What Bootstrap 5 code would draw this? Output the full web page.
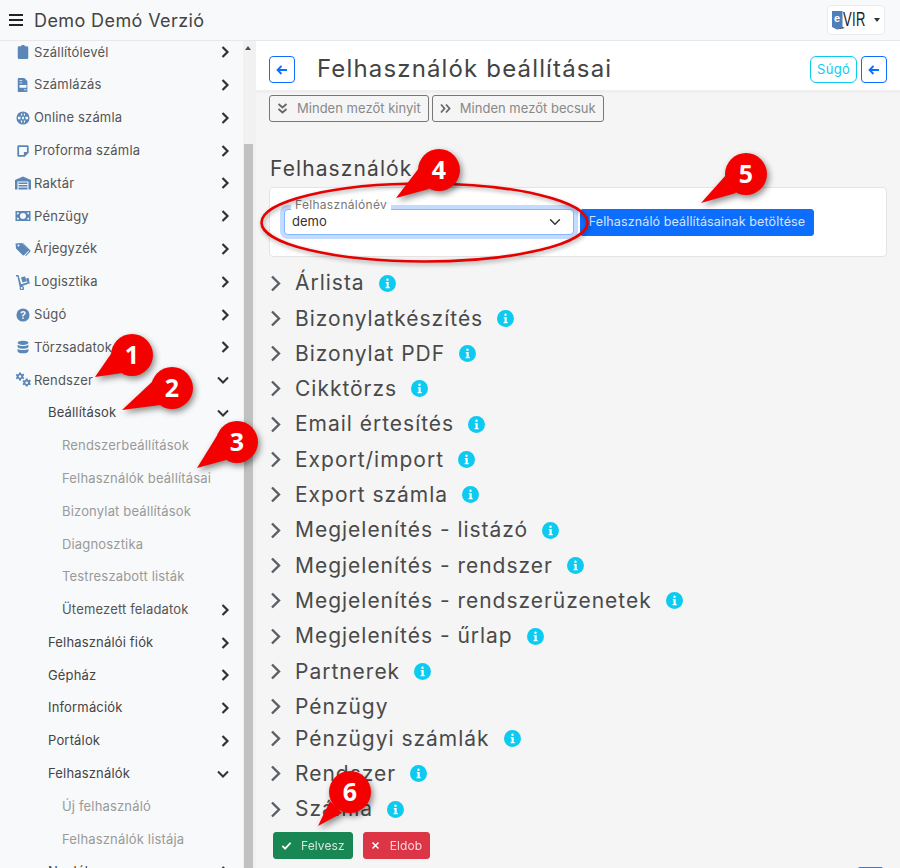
<!DOCTYPE html>
<html lang="hu">
<head>
  <meta charset="utf-8">
  <title>Felhasználók beállításai</title>
  <link rel="stylesheet" href="https://cdn.jsdelivr.net/npm/bootstrap@5.3.0/dist/css/bootstrap.min.css">
  <style>
    html, body { height: 100%; }
    body { font-family: Inter, "Open Sans", sans-serif; background: #f5f5f5; color: #495057; overflow: hidden; position: relative; }

    /* top bar */
    .top-bar { height: 41px; padding: 0 15px 0 9px; background: #f8f9fa; border-bottom: 1px solid #e7e8e9; flex-shrink: 0; }
    .app-title { font-size: 18px; letter-spacing: .4px; color: #444; margin-left: 11px; }
    .logo-btn { width: 58px; height: 30px; background: #fff; border: 1px solid #e9ecef; border-radius: 4px; padding: 0 0 0 3px; }
    .logo-caret { border-top: 4px solid #333; border-left: 3.5px solid transparent; border-right: 3.5px solid transparent; margin-left: 6px; }

    /* sidebar */
    .side-menu { width: 243px; background: #f8f9fa; overflow: hidden; flex-shrink: 0; }
    .side-list { margin-top: -5.1px; }
    .side-row { height: 32.8px; font-size: 13px; letter-spacing: .17px; color: #555; padding: 0 13px 0 34px; position: relative; text-decoration: none; }
    .side-row.lvl2 { padding-left: 48px; color: #444; }
    .side-row.lvl3 { padding-left: 62px; color: #999; }
    .side-row.lvl3-dark { padding-left: 62px; color: #555; }
    .side-icon { position: absolute; left: 16px; top: 9.4px; width: 14px; height: 14px; fill: #5a86b8; }
    .side-icon.wide { left: 15px; top: 8.4px; width: 16px; height: 16px; }
    .chev { width: 10px; height: 12px; fill: none; stroke: #333; stroke-width: 2.2; }
    .chev-down { width: 14px; height: 10px; fill: none; stroke: #333; stroke-width: 2; }
    .side-scroll { width: 13px; background: #f1f1f1; flex-shrink: 0; padding: 103px 3px 0 1px; position: relative; }
    .side-scroll-thumb { height: 100%; background: #c1c1c1; }
    .side-scroll-up { position: absolute; top: 5px; left: 2px; border-bottom: 4px solid #505050; border-left: 3.5px solid transparent; border-right: 3.5px solid transparent; }

    /* content */
    .page-head { height: 52px; background: #fff; padding: 8px 13px 0 13px; border-bottom: 3px solid #efefef; flex-shrink: 0; }
    .page-title { font-size: 24px; font-weight: 400; letter-spacing: 1.15px; margin: 0 0 0 22px; color: #444; }
    .square-btn { width: 26px; height: 27px; padding: 0; border-radius: 4px; }
    .square-btn svg { width: 12px; height: 12px; fill: none; stroke: currentColor; stroke-width: 1.8; }
    .help-btn { height: 27px; width: 47px; padding: 0; font-size: 13px; letter-spacing: .3px; }
    .tool-row { padding: 2px 0 0 13px; gap: 3px; }
    .tool-btn { height: 27px; font-size: 13px; letter-spacing: .02px; color: #888; border: 1px solid #777; border-radius: 3px; padding: 0 7px; background: transparent; }
    .tool-btn svg { width: 11px; height: 11px; fill: none; stroke: #666; stroke-width: 1.8; margin-right: 9px; }
    .section-title { font-size: 21px; font-weight: 400; letter-spacing: 1.1px; margin: 34px 0 6px 14px; line-height: 25px; color: #444; }
    .user-card { margin: 0 13px 0 13px; height: 70px; padding: 21px 0 0 14px; border-color: #e4e4e4; border-radius: 4px; }
    .user-select-wrap { width: 290px; position: relative; }
    .user-select { height: 26px; padding: 0 30px 0 7px; font-size: 13px; color: #333; border-color: #86b7fe; border-radius: 4px; box-shadow: 0 0 0 4px rgba(13, 110, 253, .25); background-position: right 10px center; }
    .user-label { position: absolute; left: 7px; top: -11px; background: #fff; padding: 0 4px; font-size: 12px; letter-spacing: .3px; line-height: 14px; color: #777; }
    .load-btn { height: 27px; width: 234px; margin-left: 6px; padding: 0; font-size: 12.5px; letter-spacing: .12px; border-radius: 3px; color: #d4e4ff; }
    .group-list { padding: 8.4px 0 0 14px; }
    .group-row { height: 35.3px; font-size: 21px; letter-spacing: .98px; color: #4a4a4a; }
    .group-row.short { height: 32px; padding-top: 3px; }
    .group-chev { width: 11px; height: 17px; fill: none; stroke: #5a5f66; stroke-width: 2.4; margin-right: 14px; }
    .info-dot { width: 17px; height: 17px; margin-left: 14px; }
    .form-actions { padding: 5.4px 0 0 17px; gap: 10px; }
    .act-btn { height: 27px; font-size: 12px; letter-spacing: .1px; padding: 0 7px; border-radius: 3px; }
    .act-btn span { opacity: .8; }
    .act-btn svg { width: 11px; height: 11px; fill: none; stroke: #fff; stroke-width: 2; margin-right: 9px; }
    .act-btn svg.act-x { width: 9px; height: 9px; margin-right: 10px; }
    .bottom-peek { position: absolute; right: 17px; bottom: -26px; width: 25px; height: 27px; background: #2f7fe0; border-radius: 2px; }

    /* numbered markers lying over the page */
    .marks { position: absolute; left: 0; top: 0; width: 900px; height: 868px; pointer-events: none; }
    .mark { fill: #f40000; filter: drop-shadow(2px 3px 3px rgba(0, 0, 0, .45)); }
    .mark-num { fill: #fff; font-family: "Open Sans", sans-serif; font-weight: 700; font-size: 25px; text-anchor: middle; }
    .mark-ring { fill: none; stroke: #e80000; stroke-width: 2.6; filter: drop-shadow(1px 2px 2px rgba(0, 0, 0, .35)); }
  </style>
</head>
<body class="d-flex flex-column">

  <svg width="0" height="0" class="position-absolute">
    <symbol id="i-clip" viewBox="0 0 16 16"><path d="M6 1.500a2 2 0 0 1 4 0H12.500A1.500 1.500 0 0 1 14 3v11.500A1.500 1.500 0 0 1 12.500 16h-9A1.500 1.500 0 0 1 2 14.500V3a1.500 1.500 0 0 1 1.500-1.500z"/></symbol>
    <symbol id="i-file" viewBox="0 0 16 16"><path fill-rule="evenodd" d="M3 0h6.500L13 3.500V15a1 1 0 0 1-1 1H3a1 1 0 0 1-1-1V1a1 1 0 0 1 1-1zM4 2.500v1h3v-1zM4 5v1h3V5zM4 8v3h8V8zM9 13v1h3v-1z"/></symbol>
    <symbol id="i-globe" viewBox="0 0 16 16"><path fill-rule="evenodd" d="M8 .5a7.500 7.500 0 1 1 0 15 7.500 7.500 0 0 1 0-15zM7 2C6 3 5.600 4 5.400 5.200h1.600V2zm2 0v3.200h1.600C10.400 4 10 3 9 2zM2.300 6.500v3h2.900a14 14 0 0 1 0-3zm4.700 0a13 13 0 0 0 0 3h2a13 13 0 0 0 0-3zm3.800 0a14 14 0 0 1 0 3h2.900v-3zM5.400 10.800C5.600 12 6 13 7 14v-3.200zm3.600 0V14c1-1 1.400-2 1.600-3.200z"/></symbol>
    <symbol id="i-note" viewBox="0 0 16 16"><path fill-rule="evenodd" d="M3 1.500h10A1.500 1.500 0 0 1 14.500 3v7L10 14.500H3A1.500 1.500 0 0 1 1.500 13V3A1.500 1.500 0 0 1 3 1.500zM3.500 3.500v9H9V9h3.500V3.500z"/></symbol>
    <symbol id="i-ware" viewBox="0 0 16 16"><path fill-rule="evenodd" d="M0 5 8 1.500 16 5v9.500h-2.500V6.500h-11v8H0zM3.500 7.500h9V9h-9zM3.500 10h9v1.500h-9zM3.500 12.500h9V14.500h-9z"/></symbol>
    <symbol id="i-money" viewBox="0 0 16 16"><path fill-rule="evenodd" d="M.5 3h15v10H.5zM8 5a3 3 0 1 0 0 6 3 3 0 0 0 0-6zM2 4.500v2a2 2 0 0 0 2-2zM12 4.500a2 2 0 0 0 2 2v-2zM2 9.500v2h2a2 2 0 0 0-2-2zM14 9.500a2 2 0 0 0-2 2h2z"/></symbol>
    <symbol id="i-tags" viewBox="0 0 16 16"><path fill-rule="evenodd" d="M.5 2.500 1 7.500l6.500 6.500a1.200 1.200 0 0 0 1.700 0l3.800-3.800a1.200 1.200 0 0 0 0-1.700L6.500 2zM3.500 3.500a1 1 0 1 1 0 2 1 1 0 0 1 0-2z"/><path d="M8 2 15 9a1.500 1.500 0 0 1 0 2l-4 4-.8-.8L14 10.400 7 2z"/></symbol>
    <symbol id="i-dolly" viewBox="0 0 16 16"><path fill-rule="evenodd" d="M1 1h2.500l2.600 9.300 8.400-2.500.4 1.400L7.300 12a2.200 2.200 0 1 1-2.500 1.500L2.500 2.500H1zM6.700 13a1 1 0 1 0 0 2 1 1 0 0 0 0-2z"/><path d="m6 3.500 4-1.200 1.500 5-4 1.200zM11 4.500l2.500-.7 1 3.700-2.500.7z"/></symbol>
    <symbol id="i-quest" viewBox="0 0 16 16"><path fill-rule="evenodd" d="M8 .5a7.500 7.500 0 1 1 0 15 7.500 7.500 0 0 1 0-15zM8.200 3.500c-1.700 0-2.800.8-3.100 2.200l1.500.5c.2-.7.700-1.200 1.500-1.200.7 0 1.200.4 1.200.9 0 .6-.5.9-1.100 1.300-.7.500-1.200 1-1.200 2v.4h1.700v-.3c0-.5.300-.8.900-1.200.8-.5 1.500-1.100 1.500-2.300 0-1.400-1.200-2.300-2.900-2.300zM8 10.500a1 1 0 1 0 0 2 1 1 0 0 0 0-2z"/></symbol>
    <symbol id="i-db" viewBox="0 0 16 16"><path d="M8 .8c3.600 0 6.200 1 6.200 2.400S11.600 5.600 8 5.600 1.800 4.600 1.800 3.200 4.400.8 8 .8z"/><path d="M1.800 5.300C3 6.400 5.400 6.900 8 6.900s5-.5 6.200-1.600v2.500c0 1.300-2.600 2.300-6.200 2.300s-6.200-1-6.200-2.300z"/><path d="M1.800 9.900c1.200 1.100 3.600 1.600 6.200 1.600s5-.5 6.200-1.600v2.900c0 1.400-2.600 2.400-6.200 2.400s-6.200-1-6.200-2.400z"/></symbol>
    <symbol id="i-cogs" viewBox="0 0 16 16"><path fill-rule="evenodd" d="M4 .5h2l.2 1.300 1 .5 1.100-.7 1 1.400-1 .9v1.100l1 .9-1 1.400-1.100-.7-1 .5L6 8.500H4l-.2-1.400-1-.5-1.100.7-1-1.400 1-.9V4.100l-1-.9 1-1.400 1.100.7 1-.5zM5 3.200a1.300 1.300 0 1 0 0 2.600 1.300 1.300 0 0 0 0-2.600z"/><path fill-rule="evenodd" d="M10.700 6.500h2l.2 1.200 1 .5 1.100-.6.900 1.400-.9.900v1.100l.9.900-.9 1.400-1.100-.6-1 .5-.2 1.300h-2l-.2-1.300-1-.5-1.100.6-.9-1.400.9-.9V10.300l-.9-.9.900-1.400 1.100.6 1-.5zM11.700 9.500a1.300 1.300 0 1 0 0 2.600 1.300 1.300 0 0 0 0-2.600z"/></symbol>
    <symbol id="c-right" viewBox="0 0 10 12"><path d="M2.500 1 7.500 6l-5 5"/></symbol>
    <symbol id="c-down" viewBox="0 0 14 10"><path d="M2 2.500 7 7.500l5-5"/></symbol>
    <symbol id="c-group" viewBox="0 0 11 17"><path d="M2 1.500 9 8.500l-7 7"/></symbol>
    <symbol id="i-info" viewBox="0 0 17 17"><circle cx="8.500" cy="8.500" r="8.500" fill="#0dcaf0"/><path fill="#fff" d="M8.500 3.500a1.200 1.200 0 1 1 0 2.400 1.200 1.200 0 0 1 0-2.400zM6.800 7h2.900v5h1v1.300H6.600V12h1V8.300h-.8z"/></symbol>
    <symbol id="i-back" viewBox="0 0 12 12"><path d="M11 6H1.500M5.500 2 1.500 6l4 4"/></symbol>
  </svg>

  <nav class="navbar top-bar d-flex justify-content-between align-items-center flex-nowrap">
    <div class="d-flex align-items-center">
      <svg width="14" height="12" viewBox="0 0 14 12" fill="#222"><rect y="0" width="14" height="2"/><rect y="5" width="14" height="2"/><rect y="10" width="14" height="2"/></svg>
      <span class="app-title">Demo Demó Verzió</span>
    </div>
    <button class="btn logo-btn d-flex align-items-center" type="button">
      <svg width="37" height="22" viewBox="0 0 37 22">
        <path d="M1 2h10.500v16L6 20.500 1 18z" fill="#4f7fb8"/>
        <path d="M11.500 18 6 20.500 14 19z" fill="#333"/>
        <text x="3" y="13" fill="#fff" font-family="Liberation Sans, sans-serif" font-size="11" font-weight="700">e</text>
        <text transform="translate(12 17) scale(1 1.6)" fill="#222" font-family="Liberation Sans, sans-serif" font-size="13" letter-spacing=".4">VIR</text>
      </svg>
      <span class="logo-caret"></span>
    </button>
  </nav>

  <div class="d-flex flex-grow-1 overflow-hidden">
    <aside class="side-menu">
      <nav class="nav flex-column flex-nowrap side-list">
        <a class="side-row d-flex align-items-center justify-content-between" href="#"><svg class="side-icon"><use href="#i-clip"/></svg>Szállítólevél<svg class="chev"><use href="#c-right"/></svg></a>
        <a class="side-row d-flex align-items-center justify-content-between" href="#"><svg class="side-icon"><use href="#i-file"/></svg>Számlázás<svg class="chev"><use href="#c-right"/></svg></a>
        <a class="side-row d-flex align-items-center justify-content-between" href="#"><svg class="side-icon"><use href="#i-globe"/></svg>Online számla<svg class="chev"><use href="#c-right"/></svg></a>
        <a class="side-row d-flex align-items-center justify-content-between" href="#"><svg class="side-icon"><use href="#i-note"/></svg>Proforma számla<svg class="chev"><use href="#c-right"/></svg></a>
        <a class="side-row d-flex align-items-center justify-content-between" href="#"><svg class="side-icon wide"><use href="#i-ware"/></svg>Raktár<svg class="chev"><use href="#c-right"/></svg></a>
        <a class="side-row d-flex align-items-center justify-content-between" href="#"><svg class="side-icon wide"><use href="#i-money"/></svg>Pénzügy<svg class="chev"><use href="#c-right"/></svg></a>
        <a class="side-row d-flex align-items-center justify-content-between" href="#"><svg class="side-icon wide"><use href="#i-tags"/></svg>Árjegyzék<svg class="chev"><use href="#c-right"/></svg></a>
        <a class="side-row d-flex align-items-center justify-content-between" href="#"><svg class="side-icon wide"><use href="#i-dolly"/></svg>Logisztika<svg class="chev"><use href="#c-right"/></svg></a>
        <a class="side-row d-flex align-items-center justify-content-between" href="#"><svg class="side-icon"><use href="#i-quest"/></svg>Súgó<svg class="chev"><use href="#c-right"/></svg></a>
        <a class="side-row d-flex align-items-center justify-content-between" href="#"><svg class="side-icon"><use href="#i-db"/></svg>Törzsadatok<svg class="chev"><use href="#c-right"/></svg></a>
        <a class="side-row d-flex align-items-center justify-content-between" href="#"><svg class="side-icon wide"><use href="#i-cogs"/></svg>Rendszer<svg class="chev-down"><use href="#c-down"/></svg></a>
        <a class="side-row lvl2 d-flex align-items-center justify-content-between" href="#">Beállítások<svg class="chev-down"><use href="#c-down"/></svg></a>
        <a class="side-row lvl3 d-flex align-items-center" href="#">Rendszerbeállítások</a>
        <a class="side-row lvl3 d-flex align-items-center" href="#">Felhasználók beállításai</a>
        <a class="side-row lvl3 d-flex align-items-center" href="#">Bizonylat beállítások</a>
        <a class="side-row lvl3 d-flex align-items-center" href="#">Diagnosztika</a>
        <a class="side-row lvl3 d-flex align-items-center" href="#">Testreszabott listák</a>
        <a class="side-row lvl3-dark d-flex align-items-center justify-content-between" href="#">Ütemezett feladatok<svg class="chev"><use href="#c-right"/></svg></a>
        <a class="side-row lvl2 d-flex align-items-center justify-content-between" href="#">Felhasználói fiók<svg class="chev"><use href="#c-right"/></svg></a>
        <a class="side-row lvl2 d-flex align-items-center justify-content-between" href="#">Gépház<svg class="chev"><use href="#c-right"/></svg></a>
        <a class="side-row lvl2 d-flex align-items-center justify-content-between" href="#">Információk<svg class="chev"><use href="#c-right"/></svg></a>
        <a class="side-row lvl2 d-flex align-items-center justify-content-between" href="#">Portálok<svg class="chev"><use href="#c-right"/></svg></a>
        <a class="side-row lvl2 d-flex align-items-center justify-content-between" href="#">Felhasználók<svg class="chev-down"><use href="#c-down"/></svg></a>
        <a class="side-row lvl3 d-flex align-items-center" href="#">Új felhasználó</a>
        <a class="side-row lvl3 d-flex align-items-center" href="#">Felhasználók listája</a>
        <a class="side-row lvl2 d-flex align-items-center justify-content-between" href="#">Naplók<svg class="chev"><use href="#c-right"/></svg></a>
      </nav>
    </aside>
    <div class="side-scroll"><span class="side-scroll-up"></span><div class="side-scroll-thumb"></div></div>

    <main class="flex-grow-1 d-flex flex-column overflow-hidden">
      <header class="page-head d-flex align-items-center">
        <button class="btn btn-outline-primary square-btn d-flex align-items-center justify-content-center" type="button"><svg><use href="#i-back"/></svg></button>
        <h1 class="page-title flex-grow-1">Felhasználók beállításai</h1>
        <button class="btn btn-outline-info help-btn me-1" type="button">Súgó</button>
        <button class="btn btn-outline-primary square-btn d-flex align-items-center justify-content-center" type="button"><svg><use href="#i-back"/></svg></button>
      </header>

      <div class="tool-row d-flex">
        <button class="btn tool-btn d-flex align-items-center" type="button"><svg viewBox="0 0 11 11"><path d="M1.500 1 5.500 4.500 9.500 1M1.500 6 5.500 9.500 9.500 6"/></svg>Minden mezőt kinyit</button>
        <button class="btn tool-btn d-flex align-items-center" type="button"><svg viewBox="0 0 11 11"><path d="M1 1.500 4.500 5.500 1 9.500M6 1.500 9.500 5.500 6 9.500"/></svg>Minden mezőt becsuk</button>
      </div>

      <h2 class="section-title">Felhasználók</h2>
      <div class="card user-card">
        <div class="d-flex align-items-start">
          <div class="user-select-wrap">
            <span class="user-label">Felhasználónév</span>
            <select class="form-select user-select"><option>demo</option></select>
          </div>
          <button class="btn btn-primary load-btn" type="button">Felhasználó beállításainak betöltése</button>
        </div>
      </div>

      <div class="group-list">
        <div class="group-row d-flex align-items-center"><svg class="group-chev"><use href="#c-group"/></svg>Árlista<svg class="info-dot"><use href="#i-info"/></svg></div>
        <div class="group-row d-flex align-items-center"><svg class="group-chev"><use href="#c-group"/></svg>Bizonylatkészítés<svg class="info-dot"><use href="#i-info"/></svg></div>
        <div class="group-row d-flex align-items-center"><svg class="group-chev"><use href="#c-group"/></svg>Bizonylat PDF<svg class="info-dot"><use href="#i-info"/></svg></div>
        <div class="group-row d-flex align-items-center"><svg class="group-chev"><use href="#c-group"/></svg>Cikktörzs<svg class="info-dot"><use href="#i-info"/></svg></div>
        <div class="group-row d-flex align-items-center"><svg class="group-chev"><use href="#c-group"/></svg>Email értesítés<svg class="info-dot"><use href="#i-info"/></svg></div>
        <div class="group-row d-flex align-items-center"><svg class="group-chev"><use href="#c-group"/></svg>Export/import<svg class="info-dot"><use href="#i-info"/></svg></div>
        <div class="group-row d-flex align-items-center"><svg class="group-chev"><use href="#c-group"/></svg>Export számla<svg class="info-dot"><use href="#i-info"/></svg></div>
        <div class="group-row d-flex align-items-center"><svg class="group-chev"><use href="#c-group"/></svg>Megjelenítés - listázó<svg class="info-dot"><use href="#i-info"/></svg></div>
        <div class="group-row d-flex align-items-center"><svg class="group-chev"><use href="#c-group"/></svg>Megjelenítés - rendszer<svg class="info-dot"><use href="#i-info"/></svg></div>
        <div class="group-row d-flex align-items-center"><svg class="group-chev"><use href="#c-group"/></svg>Megjelenítés - rendszerüzenetek<svg class="info-dot"><use href="#i-info"/></svg></div>
        <div class="group-row d-flex align-items-center"><svg class="group-chev"><use href="#c-group"/></svg>Megjelenítés - űrlap<svg class="info-dot"><use href="#i-info"/></svg></div>
        <div class="group-row d-flex align-items-center"><svg class="group-chev"><use href="#c-group"/></svg>Partnerek<svg class="info-dot"><use href="#i-info"/></svg></div>
        <div class="group-row short d-flex align-items-center"><svg class="group-chev"><use href="#c-group"/></svg>Pénzügy</div>
        <div class="group-row d-flex align-items-center"><svg class="group-chev"><use href="#c-group"/></svg>Pénzügyi számlák<svg class="info-dot"><use href="#i-info"/></svg></div>
        <div class="group-row d-flex align-items-center"><svg class="group-chev"><use href="#c-group"/></svg>Rendszer<svg class="info-dot"><use href="#i-info"/></svg></div>
        <div class="group-row d-flex align-items-center"><svg class="group-chev"><use href="#c-group"/></svg>Számla<svg class="info-dot"><use href="#i-info"/></svg></div>
      </div>

      <div class="form-actions d-flex">
        <button class="btn btn-success act-btn d-flex align-items-center" type="button"><svg viewBox="0 0 12 12"><path d="M1.500 6.500 4.500 9.500 10.500 3"/></svg><span>Felvesz</span></button>
        <button class="btn btn-danger act-btn d-flex align-items-center" type="button"><svg class="act-x" viewBox="0 0 12 12"><path d="M2 2 10 10M10 2 2 10"/></svg><span>Eldob</span></button>
      </div>
    </main>
  </div>

  <div class="bottom-peek"></div>

  <!-- numbered callouts and the ring around the user field -->
  <svg class="marks" viewBox="0 0 900 868">
    <ellipse class="mark-ring" cx="424.500" cy="222.500" rx="163" ry="39"/>
    <g class="mark"><circle cx="132" cy="355" r="21"/><polygon points="95,377 113,351 122,373"/></g>
    <text class="mark-num" x="132" y="364">1</text>
    <g class="mark"><circle cx="172" cy="388" r="21"/><polygon points="122,410 153,381 160,405"/></g>
    <text class="mark-num" x="172" y="397">2</text>
    <g class="mark"><circle cx="237" cy="442" r="21"/><polygon points="197,468 218,434 226,460"/></g>
    <text class="mark-num" x="237" y="451">3</text>
    <g class="mark"><circle cx="439" cy="170" r="21"/><polygon points="396,198 419,168 429,189"/></g>
    <text class="mark-num" x="439" y="179">4</text>
    <g class="mark"><circle cx="746" cy="174" r="21"/><polygon points="701,203 726,175 736,193"/></g>
    <text class="mark-num" x="746" y="183">5</text>
    <g class="mark"><circle cx="350" cy="792" r="21"/><polygon points="318,826 330,801 342,813"/></g>
    <text class="mark-num" x="350" y="801">6</text>
  </svg>

  <script src="https://cdn.jsdelivr.net/npm/bootstrap@5.3.0/dist/js/bootstrap.bundle.min.js"></script>
</body>
</html>
